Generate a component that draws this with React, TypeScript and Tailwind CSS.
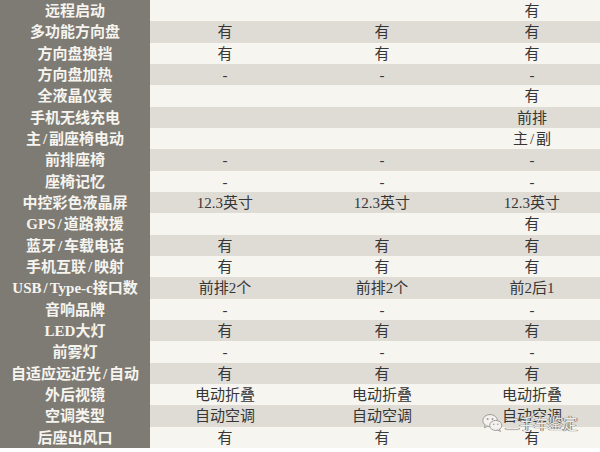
const rows: [string, string, string, string][] = [
  ["远程启动", "", "", "有"],
  ["多功能方向盘", "有", "有", "有"],
  ["方向盘换挡", "有", "有", "有"],
  ["方向盘加热", "-", "-", "-"],
  ["全液晶仪表", "", "", "有"],
  ["手机无线充电", "", "", "前排"],
  ["主/副座椅电动", "", "", "主/副"],
  ["前排座椅", "-", "-", "-"],
  ["座椅记忆", "-", "-", "-"],
  ["中控彩色液晶屏", "12.3英寸", "12.3英寸", "12.3英寸"],
  ["GPS/道路救援", "", "", "有"],
  ["蓝牙/车载电话", "有", "有", "有"],
  ["手机互联/映射", "有", "有", "有"],
  ["USB/Type-c接口数", "前排2个", "前排2个", "前2后1"],
  ["音响品牌", "-", "-", "-"],
  ["LED大灯", "有", "有", "有"],
  ["前雾灯", "-", "-", "-"],
  ["自适应远近光/自动", "有", "有", "有"],
  ["外后视镜", "电动折叠", "电动折叠", "电动折叠"],
  ["空调类型", "自动空调", "自动空调", "自动空调"],
  ["后座出风口", "有", "有", "有"],
];

const font = { fontFamily: '"Liberation Serif", "Noto Sans CJK SC", serif' };

// the slash in the source has a little air on both sides
const withSlash = (text: string) => {
  const parts = text.split("/");
  return parts.map((p, i) => (
    <span key={i}>
      {i > 0 && <span className="mx-[2px]">/</span>}
      {p}
    </span>
  ));
};

const WeChatMark = () => (
  <svg width="21" height="20" viewBox="0 0 26 24" fill="none">
    <ellipse cx="10" cy="9" rx="9" ry="7.5" fill="#f4f2ee" stroke="#9a9a96" strokeWidth="1.2" />
    <path d="M4 14.5 L3 18 L7 15.8" fill="#f4f2ee" stroke="#9a9a96" strokeWidth="1.2" strokeLinejoin="round" />
    <circle cx="7" cy="7" r="1.2" fill="#9a9a96" />
    <circle cx="13" cy="7" r="1.2" fill="#9a9a96" />
    <ellipse cx="17" cy="15" rx="7.5" ry="6.2" fill="#f4f2ee" stroke="#9a9a96" strokeWidth="1.2" />
    <path d="M21.5 19.5 L23 22.5 L19 20.6" fill="#f4f2ee" stroke="#9a9a96" strokeWidth="1.2" strokeLinejoin="round" />
    <circle cx="14.5" cy="13.5" r="1" fill="#9a9a96" />
    <circle cx="19.5" cy="13.5" r="1" fill="#9a9a96" />
  </svg>
);

export default function App() {
  return (
    <div className="relative h-[452px] w-[600px] overflow-hidden bg-white" style={font}>
      <div className="grid grid-cols-[150px_150px_164px_136px]">
        {rows.map((row, i) => {
          const stripe = i % 2 === 1 ? "bg-[#dfdcd6]" : "bg-[#f7f5f0]";
          return (
            <div key={row[0]} className="contents">
              <div className="flex h-[21.33px] items-center justify-center bg-[#7e7b74] pt-[2px] text-[15px] font-semibold leading-none text-[#f6f4ef]">
                {withSlash(row[0])}
              </div>
              {row.slice(1).map((v, j) => (
                <div
                  key={j}
                  className={`flex h-[21.33px] items-center justify-center pt-[2px] text-[15px] leading-none text-[#363636] ${stripe}`}
                >
                  {withSlash(v)}
                </div>
              ))}
            </div>
          );
        })}
      </div>

      <div className="absolute left-[482px] top-[413px] flex items-center gap-[2px]">
        <WeChatMark />
        <span
          className="text-[14.5px] leading-none text-[#ecebe7]"
          style={{
            fontFamily: '"Noto Sans CJK SC", sans-serif',
            textShadow:
              "0 0 1px #7a7a78, 0 0 1px #7a7a78, 1px 0 0 #8a8a88, -1px 0 0 #8a8a88",
          }}
        >
          二手车鉴定
        </span>
      </div>
    </div>
  );
}
